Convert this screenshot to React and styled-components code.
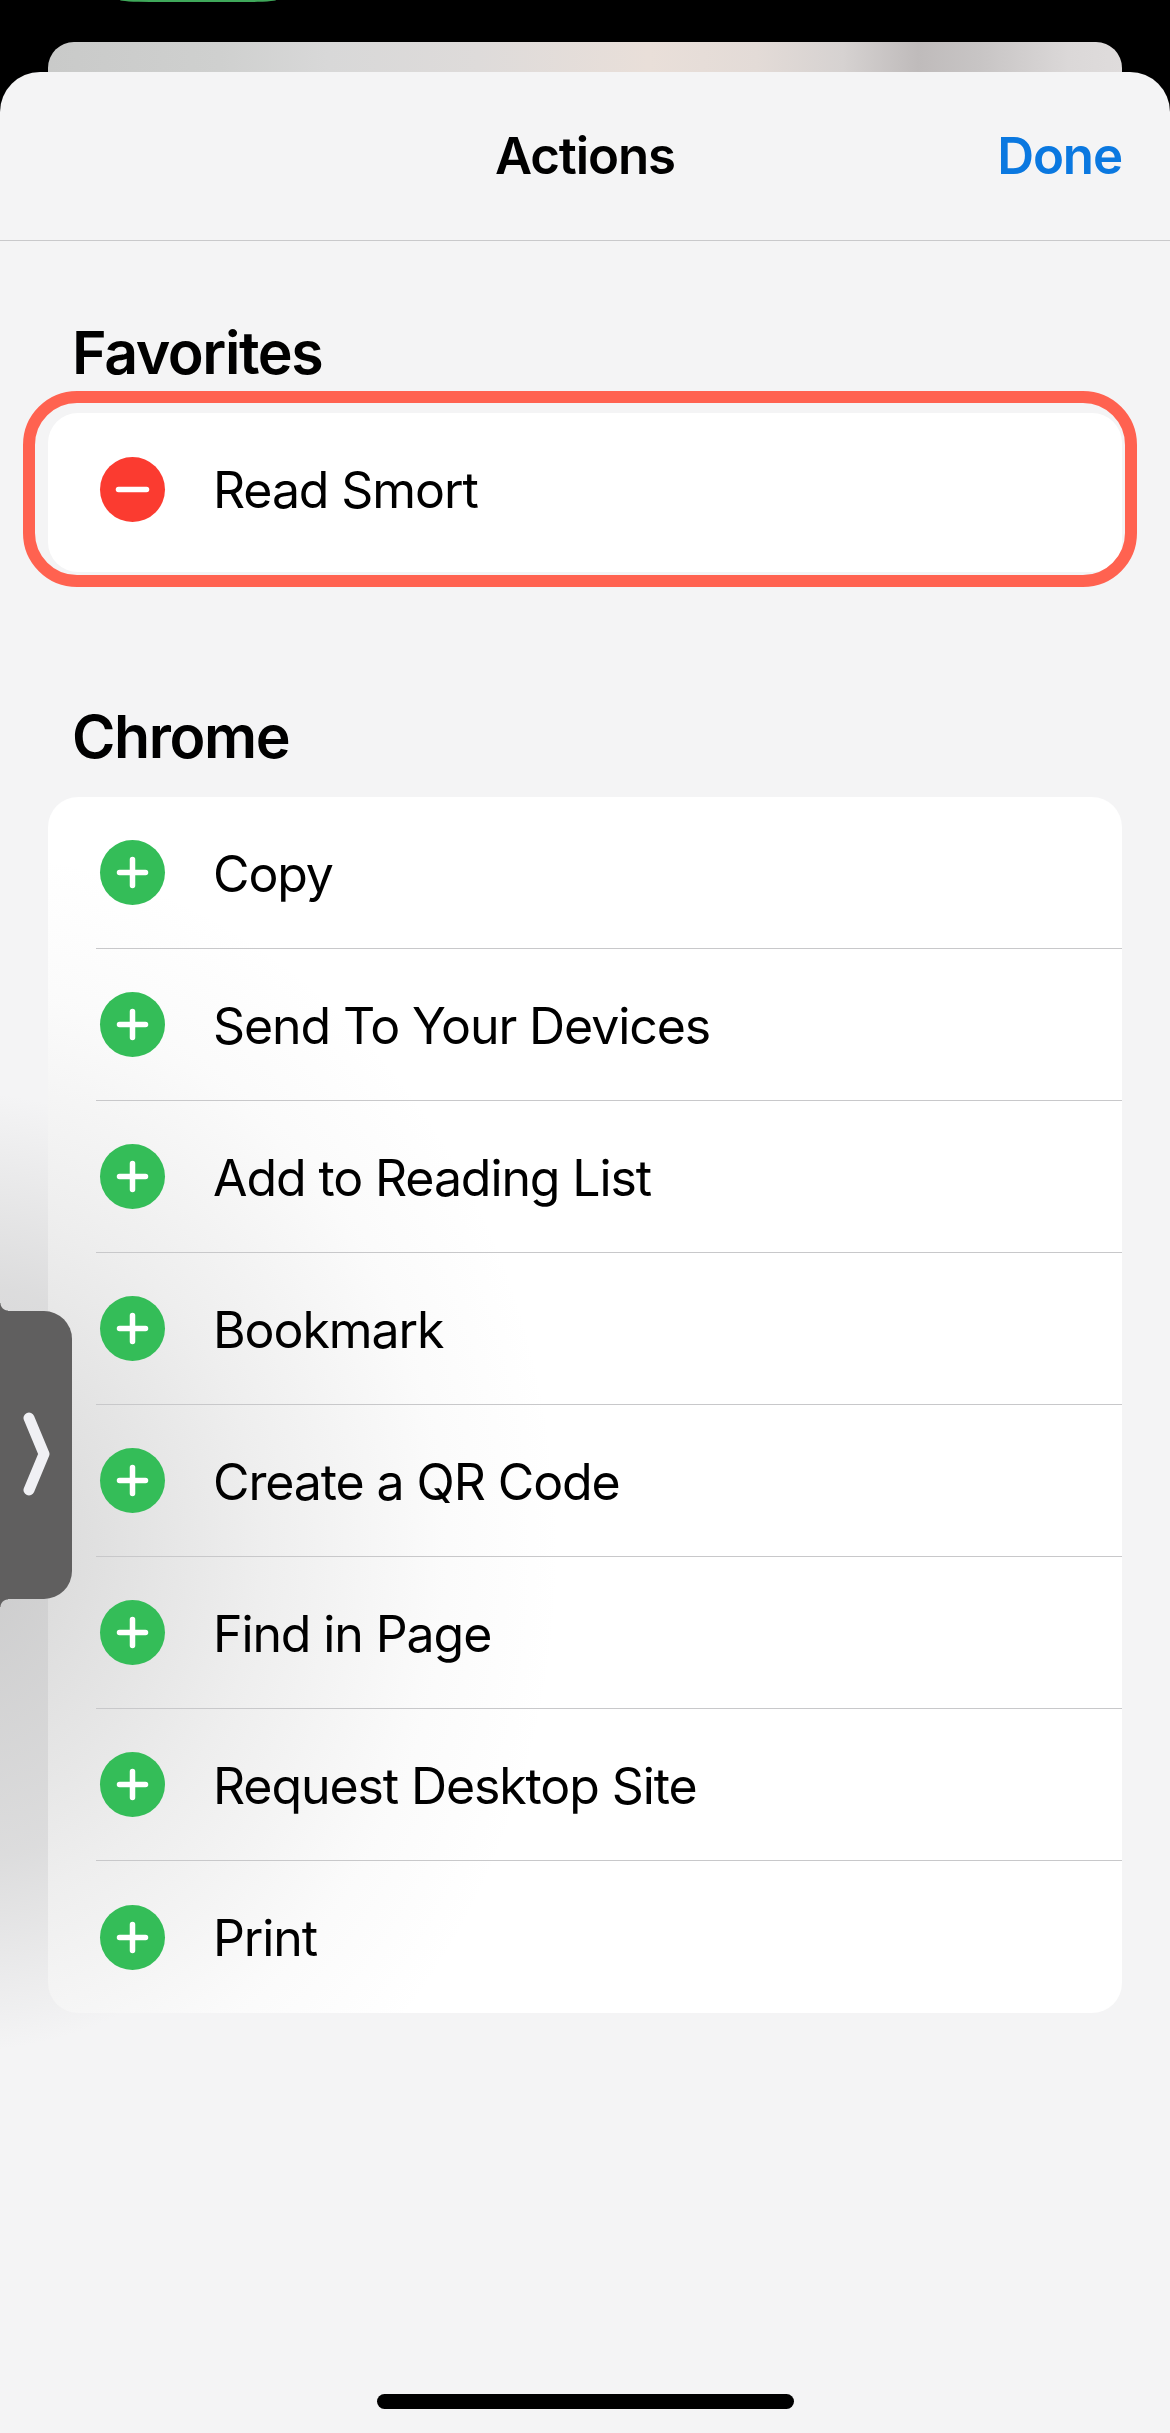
import styled, { createGlobalStyle } from 'styled-components'

const Global = createGlobalStyle`
    html, body {
        margin: 0;
        padding: 0;
        background: #000;
    }

    body {
        font-family: Inter, "Liberation Sans", sans-serif;
        color: #000;
    }
`

const Screen = styled.div`
    width: 1170px;
    height: 2433px;
    display: flex;
    flex-direction: column;
    overflow: hidden;
    position: relative;
    background: #000;
`

const StatusPill = styled.div`
    width: 156px;
    height: 2px;
    margin-left: 120px;
    border-radius: 0 0 30px 30px / 0 0 2px 2px;
    background: #3fa85a;
`

const BackCard = styled.div`
    height: 30px;
    margin: 40px 48px 0;
    border-radius: 26px 26px 0 0;
    background: linear-gradient(90deg, #c9cac9 0%, #cfd0cf 16%, #d8d8d8 26%, #dedbda 40%, #e9dfd9 56%, #e3dbd7 66%, #d6d2d1 74%, #bfbbbb 81%, #c8c5c5 87%, #dbd8d8 95%, #dfdcdc 100%);
`

const Sheet = styled.div`
    flex: 1;
    display: flex;
    flex-direction: column;
    border-radius: 40px 40px 0 0;
    background:
        radial-gradient(ellipse 420px 480px at -40px 1500px, rgba(170, 170, 170, 0.55), rgba(170, 170, 170, 0.32) 60%, rgba(170, 170, 170, 0) 100%),
        #f4f4f5;
`

const Header = styled.header`
    height: 168px;
    display: grid;
    grid-template-columns: 1fr auto 1fr;
    align-items: center;
    padding: 0 48px 0 48px;
    border-bottom: 1px solid #c9c9cb;
`

const Title = styled.h1`
    grid-column: 2;
    margin: 0;
    font-size: 51px;
    line-height: 60px;
    font-weight: 600;
    letter-spacing: -1.1px;
`

const Done = styled.button`
    grid-column: 3;
    justify-self: end;
    padding: 0;
    border: none;
    background: none;
    font: inherit;
    font-size: 51px;
    line-height: 60px;
    font-weight: 600;
    letter-spacing: -1.1px;
    color: #0a78e0;
`

const Body = styled.main`
    padding: 82px 48px 0;
`

const SectionTitle = styled.h2`
    margin: ${props => (props.$second ? '135px' : '0')} 0 30px 24px;
    font-size: 59px;
    line-height: 60px;
    font-weight: 600;
    letter-spacing: -1.4px;
`

const Card = styled.div`
    position: relative;
    border-radius: 30px;
    background:
        radial-gradient(ellipse 600px 700px at -88px 753px, rgba(170, 170, 170, 0.5), rgba(170, 170, 170, 0.2) 50%, rgba(170, 170, 170, 0.05) 80%, rgba(170, 170, 170, 0) 100%),
        #fff;
`

const FavoriteCard = styled(Card)`
    height: 159px;
    display: flex;
    background: #fff;
`

const Ring = styled.div`
    position: absolute;
    top: -22px;
    left: -25px;
    right: -15px;
    bottom: -15px;
    border: 12px solid #ff6250;
    border-radius: 54px;
`

const Row = styled.div`
    flex: 1;
    height: 152px;
    padding-left: 48px;
    display: flex;
`

const RowInner = styled.div`
    flex: 1;
    display: flex;
    align-items: center;
    gap: 48px;
    padding-left: 4px;
    border-bottom: ${props => (props.$last ? 'none' : '1px solid #c8c8ca')};
`

const Label = styled.span`
    padding-top: 2px;
    font-size: 50px;
    line-height: 60px;
    font-weight: 400;
    letter-spacing: -1.1px;
`

const Badge = styled.span`
    flex: none;
    width: 65px;
    height: 65px;
    border-radius: 50%;
    display: flex;
    align-items: center;
    justify-content: center;
    background: ${props => (props.$remove ? '#fb3b30' : '#34bd58')};
`

const BadgeIcon = styled.svg`
    width: 35px;
    height: 35px;
    stroke: #fff;
    stroke-width: 5.5;
    stroke-linecap: round;
    fill: none;
`

const Handle = styled.div`
    position: absolute;
    left: 0;
    top: 1311px;
    width: 72px;
    height: 288px;
    display: flex;
    align-items: center;
    border-radius: 0 28px 28px 0;
    background: #605f5f;

    &::before,
    &::after {
        content: "";
        position: absolute;
        left: 0;
        width: 8px;
        height: 8px;
    }

    &::before {
        top: -8px;
        background: radial-gradient(circle at 100% 0, transparent 7px, #605f5f 8px);
    }

    &::after {
        bottom: -8px;
        background: radial-gradient(circle at 100% 100%, transparent 7px, #605f5f 8px);
    }
`

const Chevron = styled.svg`
    width: 28px;
    height: 84px;
    margin-left: 22px;
    margin-top: -2px;
    stroke: #f0f0f4;
    stroke-width: 11;
    stroke-linecap: round;
    stroke-linejoin: round;
    fill: none;
`

const HomeBar = styled.div`
    width: 417px;
    height: 15px;
    margin: auto auto 24px;
    border-radius: 8px;
    background: #000;
`

const actions = [
    'Copy',
    'Send To Your Devices',
    'Add to Reading List',
    'Bookmark',
    'Create a QR Code',
    'Find in Page',
    'Request Desktop Site',
    'Print',
]

const App = () => {
    return (
        <Screen>
            <Global />
            <StatusPill />
            <BackCard />

            <Sheet>
                <Header>
                    <Title>Actions</Title>
                    <Done>Done</Done>
                </Header>

                <Body>
                    <SectionTitle>Favorites</SectionTitle>

                    <FavoriteCard>
                        <Ring />
                        <Row>
                            <RowInner $last>
                                <Badge $remove>
                                    <BadgeIcon viewBox="0 0 35 35">
                                        <path d="M3.5 17.5h28" />
                                    </BadgeIcon>
                                </Badge>
                                <Label>Read Smort</Label>
                            </RowInner>
                        </Row>
                    </FavoriteCard>

                    <SectionTitle $second>Chrome</SectionTitle>

                    <Card>
                        {actions.map((name, i) => (
                            <Row key={name}>
                                <RowInner $last={i === actions.length - 1}>
                                    <Badge>
                                        <BadgeIcon viewBox="0 0 35 35">
                                            <path d="M4.5 17.5h26M17.5 4.5v26" />
                                        </BadgeIcon>
                                    </Badge>
                                    <Label>{name}</Label>
                                </RowInner>
                            </Row>
                        ))}
                    </Card>
                </Body>

                <HomeBar />
            </Sheet>

            <Handle>
                <Chevron viewBox="0 0 28 84">
                    <path d="M7 6l15 36L7 78" />
                </Chevron>
            </Handle>
        </Screen>
    )
}

export default App
